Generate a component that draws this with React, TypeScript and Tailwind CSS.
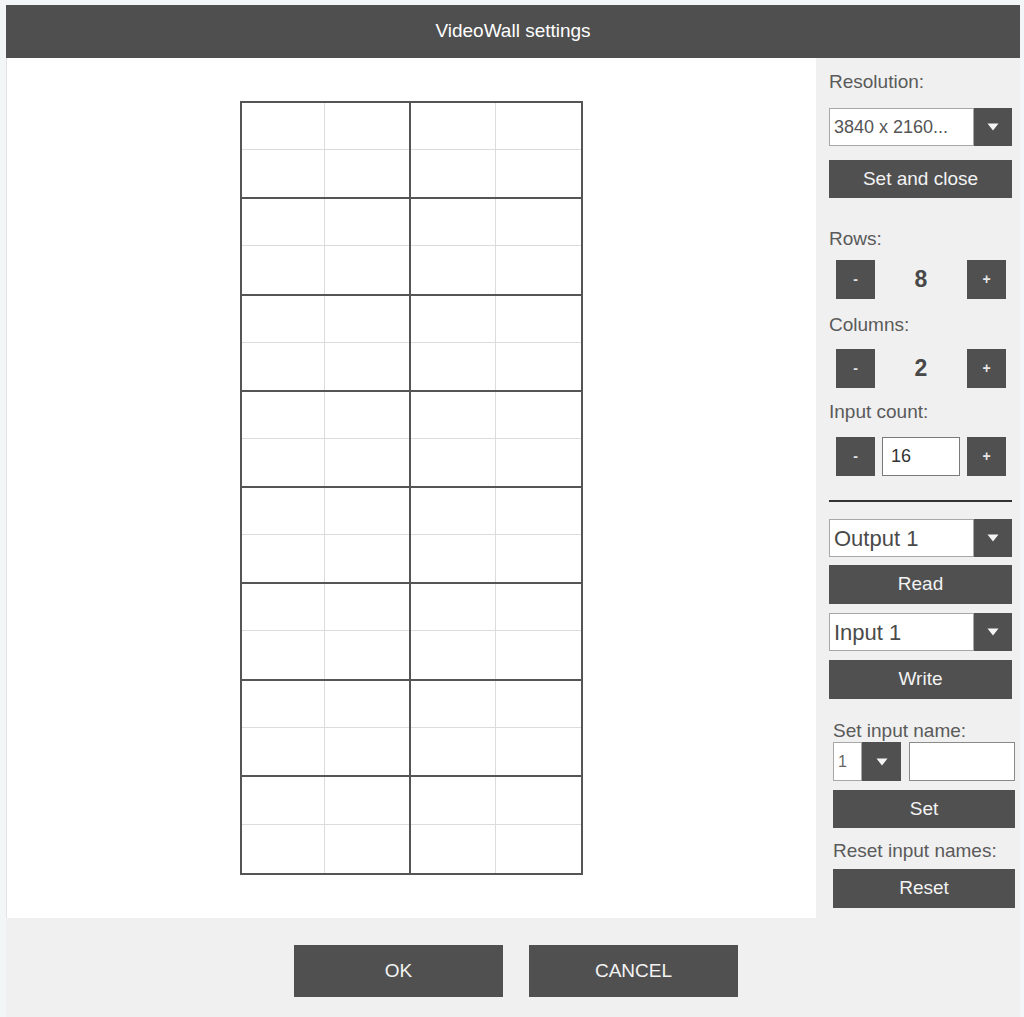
import React from "react";

const FONT = { fontFamily: '"Liberation Sans", Arial, sans-serif' };

function Arrow() {
  return (
    <svg width="12" height="8" viewBox="0 0 12 8">
      <path d="M0.5 0.5 L11.5 0.5 L6 7.5 Z" fill="#f5f5f5" />
    </svg>
  );
}

function Select({ text, textClass }: { text: string; textClass: string }) {
  return (
    <div className="flex h-[38px]">
      <div className={`flex-1 bg-white border border-[#a8a8a8] flex items-center pl-[4px] overflow-hidden whitespace-nowrap ${textClass}`}>
        {text}
      </div>
      <div className="w-[38px] bg-[#505050] flex items-center justify-center">
        <Arrow />
      </div>
    </div>
  );
}

function DarkButton({ label, h = "h-[38px]" }: { label: string; h?: string }) {
  return (
    <div className={`${h} bg-[#505050] text-[#f3f3f3] text-[19px] flex items-center justify-center`}>
      {label}
    </div>
  );
}

function SmallBtn({ sign }: { sign: string }) {
  return (
    <div className="w-[39px] h-[39px] bg-[#505050] text-[#e6e6e6] text-[14px] font-bold flex items-center justify-center">
      {sign}
    </div>
  );
}

function Stepper({ value }: { value: string }) {
  return (
    <div className="flex items-center pl-[7px] pr-[6px] justify-between">
      <SmallBtn sign="-" />
      <div className="text-[23px] font-bold text-[#484848]">{value}</div>
      <SmallBtn sign="+" />
    </div>
  );
}

function Cell({ r, c }: { r: number; c: number }) {
  const right = c === 0 ? "border-r-2" : "";
  const bottom = r < 7 ? "border-b-2" : "";
  return (
    <div className={`border-[#555555] ${right} ${bottom} grid grid-cols-2 grid-rows-2`}>
      <div className="border-r border-b border-[#dcdcdc]" />
      <div className="border-b border-[#dcdcdc]" />
      <div className="border-r border-[#dcdcdc]" />
      <div />
    </div>
  );
}

export default function App() {
  const cells: React.ReactNode[] = [];
  for (let r = 0; r < 8; r++) {
    for (let c = 0; c < 2; c++) {
      cells.push(<Cell key={`${r}-${c}`} r={r} c={c} />);
    }
  }
  return (
    <div className="w-[1024px] h-[1017px] bg-[#f3f6f6] overflow-hidden pt-[5px] pl-[6px]" style={FONT}>
      <div className="w-[1014px] h-[1012px] flex flex-col bg-[#f0f0f0]">
        <div className="h-[53px] bg-[#4f4f4f] flex items-center justify-center text-white text-[19px]">
          VideoWall settings
        </div>
        <div className="flex h-[860px]">
          <div className="w-[810px] bg-white border-l border-[#e2e2e2] flex items-center justify-center">
            <div className="w-[343px] h-[774px] mr-[1px] border-2 border-[#555555] grid grid-cols-2 grid-rows-8">
              {cells}
            </div>
          </div>
          <div className="w-[204px] bg-[#f0f0f0] pl-[13px] pr-[8px] pt-[13px] flex flex-col text-[19px] text-[#5a5a5a]">
            <div className="leading-[22px]">Resolution:</div>
            <div className="mt-[15px]">
              <Select text="3840 x 2160..." textClass="text-[18px] text-[#555555]" />
            </div>
            <div className="mt-[14px]">
              <DarkButton label="Set and close" />
            </div>
            <div className="leading-[22px] mt-[30px]">Rows:</div>
            <div className="mt-[10px]">
              <Stepper value="8" />
            </div>
            <div className="leading-[22px] mt-[15px]">Columns:</div>
            <div className="mt-[13px]">
              <Stepper value="2" />
            </div>
            <div className="leading-[22px] mt-[13px]">Input count:</div>
            <div className="mt-[14px] flex items-center pl-[7px] pr-[6px] gap-[7px]">
              <SmallBtn sign="-" />
              <div className="flex-1 h-[39px] bg-white border border-[#7a7a7a] flex items-center pl-[8px] text-[18px] text-[#333333]">
                16
              </div>
              <SmallBtn sign="+" />
            </div>
            <div className="mt-[24px] h-[2px] bg-[#333333]" />
            <div className="mt-[17px]">
              <Select text="Output 1" textClass="text-[22px] text-[#4a4a4a]" />
            </div>
            <div className="mt-[8px]">
              <DarkButton label="Read" h="h-[39px]" />
            </div>
            <div className="mt-[9px]">
              <Select text="Input 1" textClass="text-[22px] text-[#4a4a4a]" />
            </div>
            <div className="mt-[9px]">
              <DarkButton label="Write" h="h-[39px]" />
            </div>
            <div className="ml-[4px] mr-[-3px] flex flex-col">
              <div className="leading-[22px] mt-[21px]">Set input name:</div>
              <div className="flex h-[39px] gap-[8px]">
                <div className="flex w-[68px]">
                  <div className="w-[29px] bg-white border border-[#a8a8a8] flex items-center pl-[4px] text-[16px] text-[#666666]">
                    1
                  </div>
                  <div className="flex-1 bg-[#505050] flex items-center justify-center">
                    <Arrow />
                  </div>
                </div>
                <div className="flex-1 bg-white border border-[#8a8a8a]" />
              </div>
              <div className="mt-[9px]">
                <DarkButton label="Set" />
              </div>
              <div className="leading-[22px] mt-[12px]">Reset input names:</div>
              <div className="mt-[7px]">
                <DarkButton label="Reset" h="h-[39px]" />
              </div>
            </div>
          </div>
        </div>
        <div className="flex-1 flex justify-center gap-[26px] pt-[27px] pl-[6px]">
          <div className="w-[209px] h-[52px] bg-[#505050] text-[#f3f3f3] text-[19px] flex items-center justify-center">
            OK
          </div>
          <div className="w-[209px] h-[52px] bg-[#505050] text-[#f3f3f3] text-[19px] flex items-center justify-center">
            CANCEL
          </div>
        </div>
      </div>
    </div>
  );
}
